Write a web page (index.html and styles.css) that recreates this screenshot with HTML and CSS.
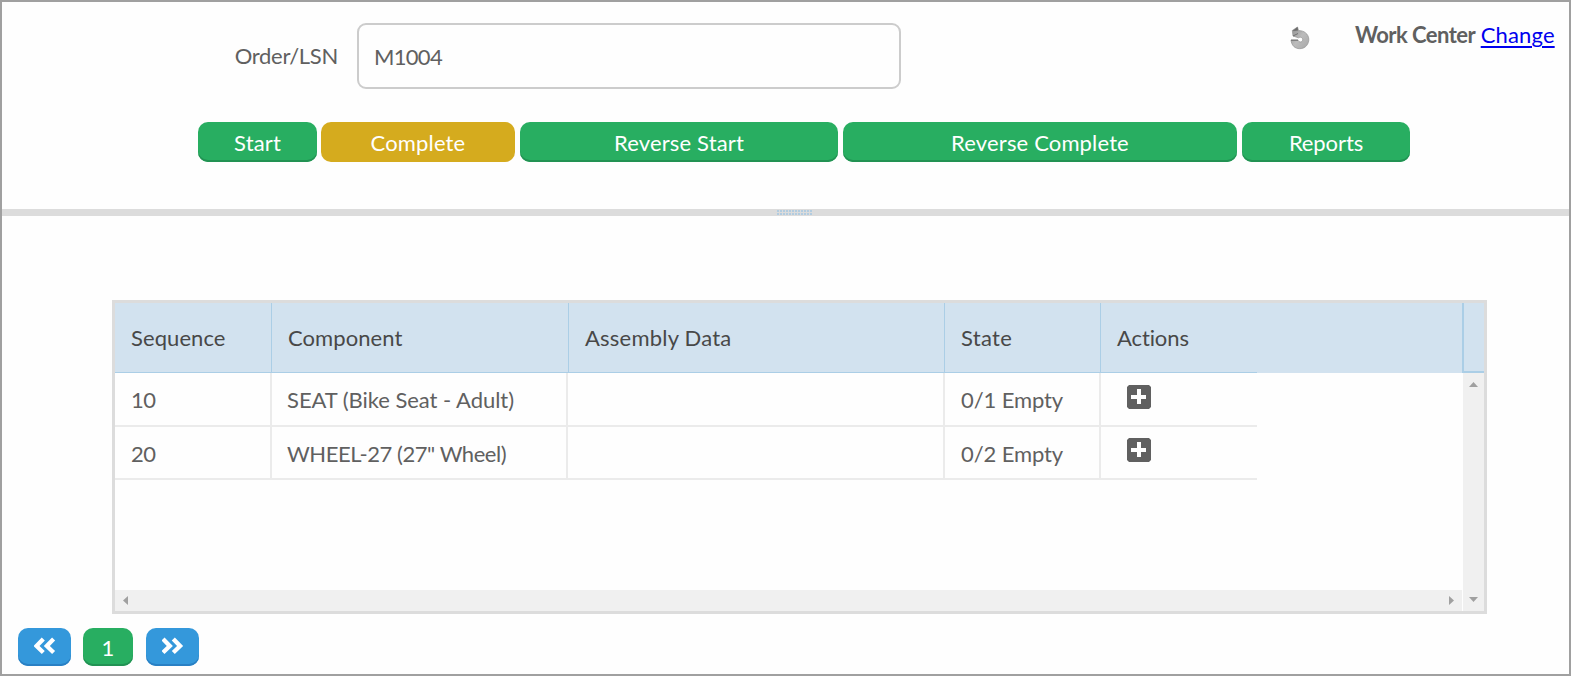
FILE: index.html
```html
<!DOCTYPE html>
<html lang="en">
<head>
<meta charset="utf-8">
<title>Work Center</title>
<link rel="stylesheet" href="styles.css">
</head>
<body>
<main class="frame">
  <section class="top">
    <div class="search">
      <label class="label" for="order"><span>Order/LSN</span></label>
      <input class="order-input" id="order" value="M1004">
      <svg class="reload" width="20" height="24" viewBox="0 0 20 24">
        <defs><linearGradient id="ring" x1="0" y1="0" x2="1" y2="1"><stop offset="0" stop-color="#8a8a8a"/><stop offset=".5" stop-color="#bcbcbc"/><stop offset="1" stop-color="#a8a8a8"/></linearGradient></defs>
        <path d="M7.500 1 L2.300 4.500 L3 10 L8.500 11.800 C10.500 10.300 13 11.800 12.700 14 C12.300 16.600 8.700 16.600 8 14 L1 14 C1.500 19.500 5 22.700 9.700 22.700 C15.500 22.700 19 18 18.800 13 C18.500 8 14 4.500 8.500 4.500 Z" fill="url(#ring)" stroke="#929292" stroke-width=".7"/>
        <path d="M7.500 1 L2.500 5 L8 4.500 Z" fill="#6b6b6b"/>
        <path d="M1 14.200H8M3 10L8 7.500" fill="none" stroke="#707070"/>
      </svg>
      <div class="center"><b>Work Center</b> <a href="#">Change</a></div>
    </div>
    <div class="buttons">
      <button class="btn start">Start</button>
      <button class="btn complete">Complete</button>
      <button class="btn reverse-start">Reverse Start</button>
      <button class="btn reverse-complete">Reverse Complete</button>
      <button class="btn reports">Reports</button>
    </div>
  </section>
  <div class="splitter"><div class="grip"></div></div>
  <section class="bottom">
    <div class="grid">
      <div class="head">
        <div class="h">Sequence</div>
        <div class="h">Component</div>
        <div class="h"><span class="t-asm">Assembly Data</span></div>
        <div class="h"><span class="t-state">State</span></div>
        <div class="h"><span class="t-act">Actions</span></div>
        <div class="h-fill"></div>
        <div class="h-corner"></div>
      </div>
      <div class="body">
        <div class="view">
          <div class="rows">
            <div class="row">
              <div class="c"><span class="t-num">10</span></div>
              <div class="c"><span class="t-seat">SEAT (Bike Seat - Adult)</span></div>
              <div class="c"></div>
              <div class="c"><span class="t-empty">0/1 Empty</span></div>
              <div class="c act"><svg class="plus" width="24" height="24" viewBox="0 0 24 24"><path d="M2 0H22L24 2V22L22 24H2L0 22V2ZM10 4V10H4V14H10V19H14V14H19V10H14V4Z" fill="#606060" fill-rule="evenodd"/></svg></div>
            </div>
            <div class="row second">
              <div class="c"><span class="t-num">20</span></div>
              <div class="c"><span class="t-wheel">WHEEL-27 (27" Wheel)</span></div>
              <div class="c"></div>
              <div class="c"><span class="t-empty">0/2 Empty</span></div>
              <div class="c act"><svg class="plus" width="24" height="24" viewBox="0 0 24 24"><path d="M2 0H22L24 2V22L22 24H2L0 22V2ZM10 4V10H4V14H10V19H14V14H19V10H14V4Z" fill="#606060" fill-rule="evenodd"/></svg></div>
            </div>
          </div>
          <div class="hbar">
            <svg width="5" height="9"><path d="M5 0V9L0 4.500Z" fill="#a0a0a0"/></svg>
            <svg width="5" height="9"><path d="M0 0V9L5 4.500Z" fill="#a0a0a0"/></svg>
          </div>
        </div>
        <div class="vbar">
          <svg width="9" height="5"><path d="M0 5H9L4.500 0Z" fill="#a0a0a0"/></svg>
          <svg width="9" height="5"><path d="M0 0H9L4.500 5Z" fill="#a0a0a0"/></svg>
        </div>
      </div>
    </div>
    <nav class="pager">
      <button class="btn blue"><svg width="22" height="18" viewBox="0 0 22 18"><path d="M9.300 2 L2.500 9 L9.300 15.500 M19.600 2 L12.800 9 L19.600 15.500" fill="none" stroke="#fff" stroke-width="4.300"/></svg></button>
      <button class="btn page">1</button>
      <button class="btn blue"><svg width="22" height="18" viewBox="0 0 22 18"><path d="M1 2 L7.800 9 L1 15.500 M11.300 2 L18.100 9 L11.300 15.500" fill="none" stroke="#fff" stroke-width="4.300"/></svg></button>
    </nav>
  </section>
</main>
</body>
</html>
```
FILE: styles.css
```css
* { box-sizing: border-box; }
body {
  margin: 0;
  font: 22px/26px Lato, "Open Sans", sans-serif;
  font-variant-ligatures: none;
  color: #606060;
  background: #fff;
}
.frame {
  width: 1571px;
  height: 676px;
  border: 2px solid #a0a0a0;
  background: #fefefe;
  overflow: hidden;
}
.top { height: 207px; padding-top: 21px; }
.search { display: flex; height: 66px; }
.label { width: 355px; padding: 20px 19px 0 0; text-align: right; white-space: nowrap; letter-spacing: -.3px; }
.order-input {
  width: 544px;
  height: 66px;
  border: 2px solid #ccc;
  border-radius: 9px;
  padding: 0 15px;
  font: inherit;
  letter-spacing: -.7px;
  color: inherit;
  background: #fefefe;
  outline: 0;
}
.reload { margin: 3px 0 0 389px; flex: none; }
.center { margin: -1px 0 0 45px; white-space: nowrap; }
.center b { letter-spacing: -.55px; }
.center a { letter-spacing: .15px; color: #0000ee; text-decoration-thickness: 2px; text-underline-offset: 3px; }
.buttons { display: flex; padding: 33px 0 0 196px; }
.btn {
  height: 40px;
  border: 0;
  border-radius: 10px;
  padding: 2px 0 0;
  font: inherit;
  letter-spacing: .15px;
  color: #fff;
  background: #28ae61;
  box-shadow: inset 0 -2px 0 #229253;
}
.start { width: 119px; }
.complete { width: 194px; margin-left: 4px; background: #d5ab1e; box-shadow: none; }
.reverse-start { width: 318px; margin-left: 5px; }
.reverse-complete { width: 394px; margin-left: 5px; }
.reports { width: 168px; margin-left: 5px; letter-spacing: -.1px; }

.splitter { height: 7px; background: #dcdcdc; display: flex; padding: 1px 0 0 775px; }
.grip {
  width: 36px;
  height: 5px;
  background:
    linear-gradient(90deg, transparent 2px, #dcdcdc 2px) 0 0 / 3px 3px,
    linear-gradient(#b2cce0 2px, #dcdcdc 2px) 0 0 / 3px 3px;
}

.bottom { padding: 84px 0 0 16px; }
.grid {
  width: 1375px;
  height: 314px;
  margin-left: 94px;
  border: 3px solid #dcdcdc;
  display: flex;
  flex-direction: column;
}
.head {
  display: grid;
  grid-template-columns: 156px 297px 376px 156px 157px 205px 22px;
  height: 70px;
  background: #d2e2ef;
  color: #484848;
}
.h { border-bottom: 1px solid #abcee6; padding: 22px 0 0 16px; white-space: nowrap; letter-spacing: .08px; }
.h + .h { border-left: 1px solid #abcee6; }
.t-asm { letter-spacing: .22px; }
.t-state { letter-spacing: .3px; }
.t-act { letter-spacing: -.1px; }
.h-corner { border-left: 2px solid #abcee6; border-bottom: 2px solid #abcee6; }
.body { display: flex; flex: 1; }
.view { width: 1347px; margin-right: 1px; display: flex; flex-direction: column; }
.rows { flex: 1; }
.row {
  display: grid;
  grid-template-columns: 157px 296px 377px 156px 156px;
  width: 1142px;
  height: 54px;
}
.second { height: 53px; }
.c { border-right: 2px solid #ebebeb; border-bottom: 2px solid #ebebeb; padding: 14px 0 0 16px; white-space: nowrap; }
.c:nth-child(2) { padding-left: 15px; }
.t-num { letter-spacing: -.5px; }
.t-wheel { letter-spacing: -.45px; }
.t-seat { letter-spacing: -.04px; }
.t-empty { letter-spacing: -.1px; }
.c.act { border-right: 0; padding: 12px 0 0 26px; line-height: 0; }
.second .act { padding-top: 11px; }
.hbar { height: 21px; background: #f0f0f0; display: flex; justify-content: space-between; padding: 6px 8px; }
.vbar { width: 21px; background: #f0f0f0; display: flex; flex-direction: column; justify-content: space-between; padding: 9px 6px; }

.pager { display: flex; padding-top: 14px; }
.pager .btn { height: 38px; }
.blue { width: 53px; background: #3498db; box-shadow: inset 0 -2px 0 #2980c4; padding: 0; }
.blue svg { display: block; margin: -3px auto 0; }
.page { width: 50px; margin: 0 13px 0 12px; }
```
